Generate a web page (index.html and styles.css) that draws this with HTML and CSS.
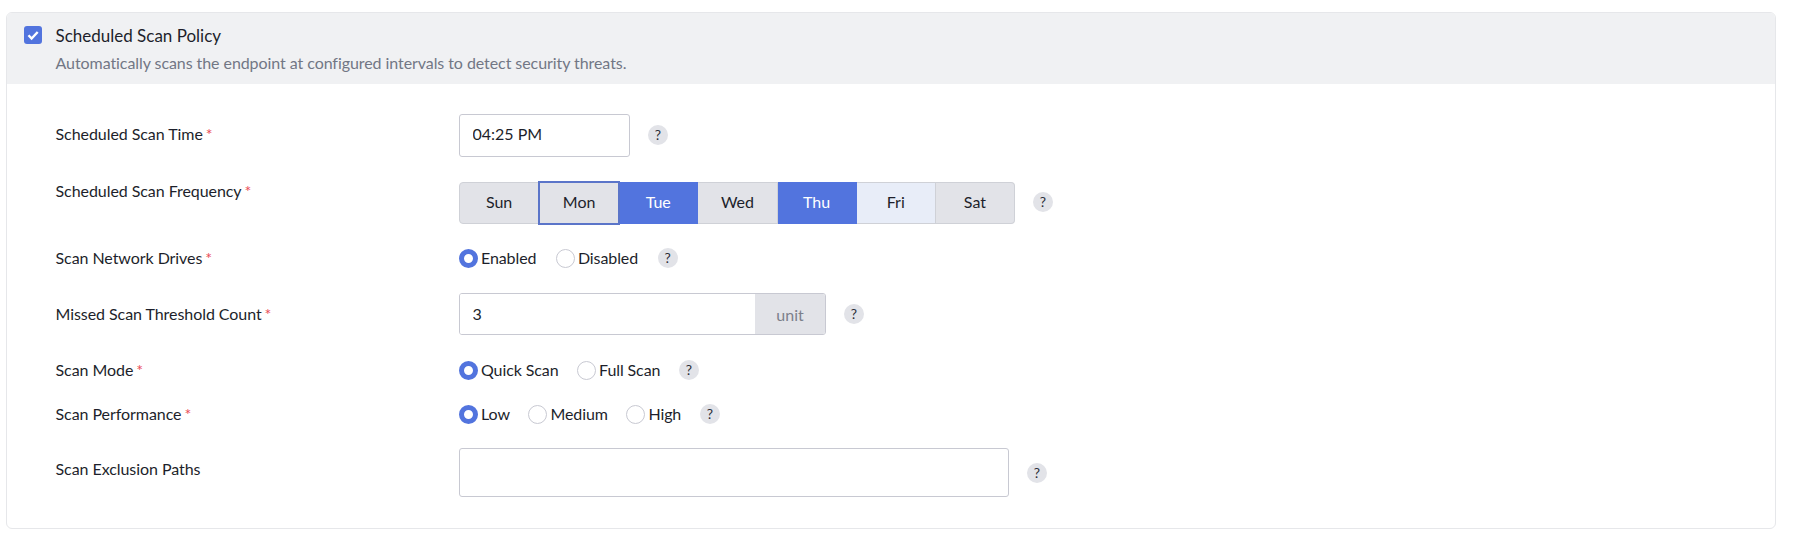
FILE: index.html
```html
<!DOCTYPE html>
<html lang="en">
<head>
<meta charset="utf-8">
<title>Scheduled Scan Policy</title>
<link rel="stylesheet" href="styles.css">
</head>
<body>
<section class="card">
  <header class="card-head">
    <span class="checkbox"><svg viewBox="0 0 18 18" width="18" height="18"><path d="M4.5 9.2 7.6 12.5 13.7 6" fill="none" stroke="#fff" stroke-width="2.4"/></svg></span>
    <div class="head-text">
      <h2 class="title">Scheduled Scan Policy</h2>
      <p class="subtitle">Automatically scans the endpoint at configured intervals to detect security threats.</p>
    </div>
  </header>
  <div class="card-body">
    <div class="row row-time">
      <label class="label">Scheduled Scan Time<span class="req">*</span></label>
      <input class="input input-time" type="text" value="04:25 PM">
      <span class="help help-time">?</span>
    </div>
    <div class="row row-freq">
      <label class="label label-top">Scheduled Scan Frequency<span class="req">*</span></label>
      <div class="days">
        <button class="day">Sun</button>
        <button class="day day-focus">Mon</button>
        <button class="day day-on">Tue</button>
        <button class="day">Wed</button>
        <button class="day day-on">Thu</button>
        <button class="day day-hover">Fri</button>
        <button class="day">Sat</button>
      </div>
      <span class="help help-freq">?</span>
    </div>
    <div class="row row-radio row-drives">
      <label class="label">Scan Network Drives<span class="req">*</span></label>
      <label class="radio"><input type="radio" name="drives" checked><span>Enabled</span></label>
      <label class="radio"><input type="radio" name="drives"><span>Disabled</span></label>
      <span class="help help-radio">?</span>
    </div>
    <div class="row row-missed">
      <label class="label">Missed Scan Threshold Count<span class="req">*</span></label>
      <div class="input-group">
        <input class="group-field" type="text" value="3">
        <span class="addon">unit</span>
      </div>
      <span class="help help-missed">?</span>
    </div>
    <div class="row row-radio row-mode">
      <label class="label">Scan Mode<span class="req">*</span></label>
      <label class="radio"><input type="radio" name="mode" checked><span>Quick Scan</span></label>
      <label class="radio"><input type="radio" name="mode"><span>Full Scan</span></label>
      <span class="help help-radio">?</span>
    </div>
    <div class="row row-radio row-perf">
      <label class="label">Scan Performance<span class="req">*</span></label>
      <label class="radio"><input type="radio" name="perf" checked><span>Low</span></label>
      <label class="radio"><input type="radio" name="perf"><span>Medium</span></label>
      <label class="radio"><input type="radio" name="perf"><span>High</span></label>
      <span class="help help-radio">?</span>
    </div>
    <div class="row row-paths">
      <label class="label label-paths">Scan Exclusion Paths</label>
      <input class="input input-paths" type="text">
      <span class="help help-paths">?</span>
    </div>
  </div>
</section>
</body>
</html>
```
FILE: styles.css
```css
* { box-sizing: border-box; }
html, body { margin: 0; padding: 0; background: #fff; }
body {
  padding: 12px 20px 15px 6px;
  font-family: Lato, "Open Sans", sans-serif;
  font-size: 16px;
  color: #1d1f2b;
}
.card {
  height: 517px;
  border: 1px solid #e6e7ea;
  border-radius: 6px;
  overflow: hidden;
  background: #fff;
}
.card-head {
  display: flex;
  height: 71px;
  padding: 13px 0 0 17px;
  background: #f0f1f3;
}
.checkbox {
  flex: none;
  width: 18px;
  height: 18px;
  border-radius: 3px;
  background: #5274de;
}
.checkbox svg { display: block; }
.head-text { margin-left: 13.5px; }
.title {
  margin: 0;
  font-size: 17px;
  font-weight: 400;
  line-height: 20px;
  color: #1d1f2b;
}
.subtitle {
  margin: 7px 0 0;
  font-size: 16px;
  letter-spacing: -0.07px;
  line-height: 20px;
  color: #727785;
}
.card-body { padding: 0 0 0 48.5px; }
.row { display: flex; align-items: center; }
.row-time { margin-top: 30px; height: 43px; }
.row-freq { margin-top: 25px; height: 42px; }
.row-drives { margin-top: 22px; }
.row-missed { margin-top: 23px; height: 42px; }
.row-mode { margin-top: 23px; }
.row-perf { margin-top: 20px; }
.row-paths { margin-top: 22px; height: 49px; }
.row-radio { height: 24px; }
.label { flex: none; width: 403.5px; line-height: 20px; letter-spacing: -0.06px; }
.row-time .label { padding-bottom: 3px; }
.label-top { align-self: flex-start; margin-top: -1px; }
.label-paths { padding-bottom: 8px; }
.req { color: #ea4a55; margin-left: 3px; }
.input {
  display: block;
  height: 100%;
  padding: 0 12.5px 4px;
  border: 1px solid #c8c9d2;
  border-radius: 3px;
  background: #fff;
  font: inherit;
  color: inherit;
  outline: none;
}
.input-time { width: 171px; }
.input-paths { width: 550px; }
.days {
  display: flex;
  width: 556px;
  height: 100%;
  border-radius: 4px;
}
.day {
  flex: 1 1 0;
  padding: 0 0 4px;
  border: 1px solid #cfd1d7;
  border-left-width: 0;
  background: #e2e3e8;
  font: inherit;
  color: inherit;
}
.day:first-child { border-left-width: 1px; border-radius: 4px 0 0 4px; }
.day:last-child { border-radius: 0 4px 4px 0; }
.day-focus {
  flex: none;
  width: 82px;
  margin: -1px;
  border: 2px solid #5b75c9;
  position: relative;
  z-index: 1;
}
.day-on { background: #5274de; border-color: #5274de; color: #fff; }
.day-hover { background: #e8edf8; }
.radio { display: flex; align-items: center; margin-right: 18.6px; letter-spacing: -0.1px; }
.radio span { padding-bottom: 1px; }
.row-drives .radio { margin-right: 19.6px; }
.radio input {
  appearance: none;
  flex: none;
  width: 19px;
  height: 19px;
  margin: 0 3px 0 0;
  border: 1px solid #c8c9d2;
  border-radius: 50%;
  background: #fff;
}
.radio input:checked { border: 5.5px solid #5274de; }
.help {
  flex: none;
  width: 20px;
  height: 20px;
  border-radius: 50%;
  background: #e2e3e8;
  font-size: 14px;
  line-height: 20px;
  text-align: center;
  color: #2a2c38;
}
.help-time { margin: 0 0 1px 18px; }
.help-freq { margin: 0 0 2px 18px; }
.help-radio { margin-left: 0; }
.help-missed { margin-left: 18px; }
.help-paths { margin-left: 18px; }
.input-group {
  display: flex;
  width: 367px;
  height: 100%;
  border: 1px solid #c8c9d2;
  border-radius: 3px;
  overflow: hidden;
}
.group-field {
  flex: 1 1 0;
  min-width: 0;
  padding: 0 12.5px 2px;
  border: 0;
  font: inherit;
  color: inherit;
  outline: none;
}
.addon {
  flex: none;
  width: 70px;
  background: #e2e3e8;
  line-height: 42px;
  text-align: center;
  color: #7c7f8b;
}
```
